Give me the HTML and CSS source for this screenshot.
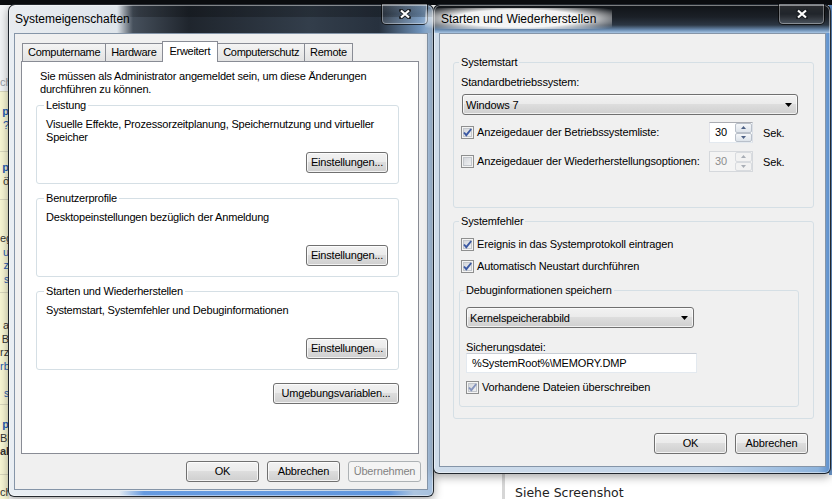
FILE: index.html
```html
<!DOCTYPE html>
<html lang="de">
<head>
<meta charset="utf-8">
<title>Systemeigenschaften</title>
<link rel="stylesheet" href="styles.css">
</head>
<body>
<div class="desktop">

  <!-- Browserseite hinter den Dialogen -->
  <div class="page-edge">
    <div class="post head"><span class="dim">ch</span></div>
    <div class="post p1"><b>p</b><br>?</div>
    <div class="post p2"><b>p</b><br><span class="txt">ö</span></div>
    <div class="post p3"><span class="txt">eg</span><br>u<br>z<br><small>s</small></div>
    <div class="post p4"><span class="txt">a<br>B<br>rz</span><br>rb<br><br><small>s</small></div>
    <div class="post p5"><b>p</b><br><span class="txt">Bl<br><b>al</b></span></div>
    <div class="post p6"><span class="txt">ch</span></div>
  </div>
  <div class="page-post">
    <p>Siehe Screenshot</p>
  </div>

  <!-- Systemeigenschaften -->
  <div class="window sysprops">
    <div class="titlebar">
      <span class="title">Systemeigenschaften</span>
      <button class="close" aria-label="Schließen">
        <svg width="12" height="10" viewBox="0 0 12 10"><path d="M2 1.5l8 7M10 1.5l-8 7" stroke="#1b1f24" stroke-width="4" stroke-linecap="round"/><path d="M2 1.5l8 7M10 1.5l-8 7" stroke="#fff" stroke-width="2.2"/></svg>
      </button>
    </div>
    <div class="client">
      <div class="tabs">
        <span class="tab">Computername</span>
        <span class="tab">Hardware</span>
        <span class="tab active">Erweitert</span>
        <span class="tab">Computerschutz</span>
        <span class="tab">Remote</span>
      </div>
      <div class="tabpanel">
        <p class="note">Sie müssen als Administrator angemeldet sein, um diese Änderungen durchführen zu können.</p>

        <div class="group perf">
          <span class="group-title">Leistung</span>
          <p class="group-text">Visuelle Effekte, Prozessorzeitplanung, Speichernutzung und virtueller Speicher</p>
          <button class="btn group-btn">Einstellungen...</button>
        </div>

        <div class="group">
          <span class="group-title">Benutzerprofile</span>
          <p class="group-text">Desktopeinstellungen bezüglich der Anmeldung</p>
          <button class="btn group-btn">Einstellungen...</button>
        </div>

        <div class="group">
          <span class="group-title">Starten und Wiederherstellen</span>
          <p class="group-text">Systemstart, Systemfehler und Debuginformationen</p>
          <button class="btn group-btn">Einstellungen...</button>
        </div>

        <div class="panel-actions">
          <button class="btn env-btn">Umgebungsvariablen...</button>
        </div>
      </div>
      <div class="dialog-buttons">
        <button class="btn">OK</button>
        <button class="btn">Abbrechen</button>
        <button class="btn" disabled>Übernehmen</button>
      </div>
    </div>
  </div>

  <!-- Starten und Wiederherstellen -->
  <div class="window startup">
    <div class="titlebar">
      <span class="title">Starten und Wiederherstellen</span>
      <button class="close" aria-label="Schließen">
        <svg width="12" height="10" viewBox="0 0 12 10"><path d="M2 1.5l8 7M10 1.5l-8 7" stroke="#1b1f24" stroke-width="4" stroke-linecap="round"/><path d="M2 1.5l8 7M10 1.5l-8 7" stroke="#fff" stroke-width="2.2"/></svg>
      </button>
    </div>
    <div class="client">
      <div class="group boot">
        <span class="group-title">Systemstart</span>
        <span class="field-label">Standardbetriebssystem:</span>
        <div class="combo os-select">
          <span>Windows 7</span>
          <svg width="7" height="4" viewBox="0 0 7 4"><path d="M0 0h7L3.5 4z" fill="#000"/></svg>
        </div>
        <div class="timeout-row">
          <label class="check">
            <span class="box"><svg width="11" height="11" viewBox="0 0 11 11"><path d="M2 5.5L4.3 8.2 9.2 2" fill="none" stroke="#3b59a3" stroke-width="1.9"/></svg></span>
            Anzeigedauer der Betriebssystemliste:
          </label>
          <div class="spin">
            <span class="spin-value">30</span>
            <span class="spin-btns">
              <span><svg width="5" height="3" viewBox="0 0 5 3"><path d="M2.5 0L5 3H0z" fill="#4d6185"/></svg></span>
              <span><svg width="5" height="3" viewBox="0 0 5 3"><path d="M0 0h5L2.5 3z" fill="#4d6185"/></svg></span>
            </span>
          </div>
          <span class="unit">Sek.</span>
        </div>
        <div class="timeout-row second">
          <label class="check">
            <span class="box"></span>
            Anzeigedauer der Wiederherstellungsoptionen:
          </label>
          <div class="spin disabled">
            <span class="spin-value">30</span>
            <span class="spin-btns">
              <span><svg width="5" height="3" viewBox="0 0 5 3"><path d="M2.5 0L5 3H0z" fill="#a8adb5"/></svg></span>
              <span><svg width="5" height="3" viewBox="0 0 5 3"><path d="M0 0h5L2.5 3z" fill="#a8adb5"/></svg></span>
            </span>
          </div>
          <span class="unit">Sek.</span>
        </div>
      </div>

      <div class="group failure">
        <span class="group-title">Systemfehler</span>
        <label class="check first">
          <span class="box"><svg width="11" height="11" viewBox="0 0 11 11"><path d="M2 5.5L4.3 8.2 9.2 2" fill="none" stroke="#3b59a3" stroke-width="1.9"/></svg></span>
          Ereignis in das Systemprotokoll eintragen
        </label>
        <label class="check">
          <span class="box"><svg width="11" height="11" viewBox="0 0 11 11"><path d="M2 5.5L4.3 8.2 9.2 2" fill="none" stroke="#3b59a3" stroke-width="1.9"/></svg></span>
          Automatisch Neustart durchführen
        </label>

        <div class="group debug">
          <span class="group-title">Debuginformationen speichern</span>
          <div class="combo dump-select">
            <span>Kernelspeicherabbild</span>
            <svg width="7" height="4" viewBox="0 0 7 4"><path d="M0 0h7L3.5 4z" fill="#000"/></svg>
          </div>
          <span class="field-label dump-label">Sicherungsdatei:</span>
          <div class="textbox">%SystemRoot%\MEMORY.DMP</div>
          <label class="check overwrite">
            <span class="box"><svg width="11" height="11" viewBox="0 0 11 11"><path d="M2 5.5L4.3 8.2 9.2 2" fill="none" stroke="#8594bd" stroke-width="1.9"/></svg></span>
            Vorhandene Dateien überschreiben
          </label>
        </div>
      </div>

      <div class="dialog-buttons">
        <button class="btn">OK</button>
        <button class="btn">Abbrechen</button>
      </div>
    </div>
  </div>

</div>
</body>
</html>
```

FILE: styles.css
```css
* {
    box-sizing: border-box;
}
body {
    margin: 0;
    width: 832px;
    height: 499px;
    overflow: hidden;
    font-family: "Liberation Sans", Arial, sans-serif;
    font-size: 11px;
    color: #000;
}
p {
    margin: 0;
}
.desktop {
    position: relative;
    width: 832px;
    height: 499px;
    overflow: hidden;
    background:
        linear-gradient(#0b0d10, #0b0d10) 0 0 / 100% 5px no-repeat,
        linear-gradient(#5f8dc6, #6f9bd0) 100% 0 / 3px 475px no-repeat,
        #fff;
}

/* Reste der Webseite hinter den Fenstern */
.page-edge {
    position: absolute;
    left: 0;
    top: 5px;
    width: 9px;
    height: 494px;
    overflow: hidden;
    text-align: right;
    line-height: 13.5px;
    color: #2a5db0;
    background: #f8f7d4;
}
.page-edge .post {
    border-bottom: 1px solid #d9d8bd;
}
.page-edge .txt {
    color: #333;
}
.page-edge .dim {
    color: #9aa0a6;
}
.page-edge small {
    font-size: 10px;
}
.page-edge .head {
    height: 87px;
    padding-top: 71px;
    background: #f3f5f7;
}
.page-edge .p1 { height: 60px; padding-top: 13px; }
.page-edge .p2 { height: 48px; padding-top: 9px; }
.page-edge .p3 { height: 93px; padding-top: 32px; }
.page-edge .p4 { height: 112px; padding-top: 26px; }
.page-edge .p5 { height: 70px; padding-top: 13px; }
.page-edge .p6 { height: 24px; padding-top: 11px; border-bottom: 0; }

.page-post {
    position: absolute;
    left: 502px;
    top: 470px;
    width: 330px;
    height: 29px;
    padding: 15px 0 0 10px;
    border-left: 3px solid #d6d6d6;
    font-family: "DejaVu Sans", sans-serif;
    font-size: 12.5px;
    line-height: 15px;
    color: #222;
}

/* Fensterrahmen (Aero, inaktiv) */
.window {
    position: absolute;
    display: flex;
    flex-direction: column;
    border: 1px solid rgba(16, 20, 26, 0.9);
    border-radius: 7px 7px 6px 6px;
    box-shadow: inset 0 0 0 1px rgba(255, 255, 255, 0.45), 0 3px 10px rgba(0, 0, 0, 0.35);
}
.sysprops {
    left: 8px;
    top: 4px;
    width: 426px;
    height: 493px;
    background:
        linear-gradient(to right, rgba(0, 0, 0, 0) 110px, rgba(0, 0, 0, 0.25) 130px) 0 0 / 100% 12px no-repeat,
        linear-gradient(to right, #e8ecf0 0, #dfe5eb 108px, #46505c 124px, #1f252d 180px, #333e4b 300px, #27313e 370px, #6f93bb 412px, #a8c4e2 100%) 0 0 / 100% 28px no-repeat,
        linear-gradient(to right, rgba(80, 140, 220, 0) 110px, rgba(80, 140, 220, 0.85) 135px, rgba(80, 140, 220, 0.85) 380px, rgba(80, 140, 220, 0) 405px) 0 100% / 100% 5px no-repeat,
        linear-gradient(to right, #e9eef3 0, #dde6ef 60%, #a7c1de 100%);
}
.startup {
    left: 433px;
    top: 4px;
    width: 398px;
    height: 470px;
    background:
        linear-gradient(#101317 0, #1b2027 12px, #2c3744 20px, #6d8fb4 25px, #a9c6e4 28px) 0 0 / 100% 28px no-repeat,
        linear-gradient(to right, #cfdcea 0, #c2d5ea 70%, #8db3dc 97%, #5c8fcc 100%);
}
.titlebar {
    flex: none;
    display: flex;
    align-items: flex-start;
    height: 28px;
}
.title {
    margin: 3px 0 0 -10px;
    padding: 4px 16px 3px;
    font-size: 12px;
    line-height: 14px;
    color: #000;
}
.startup .title {
    margin-left: -9px;
    background: radial-gradient(62% 75%, rgba(255, 255, 255, 0.95) 55%, rgba(255, 255, 255, 0) 100%);
}
.close {
    display: flex;
    align-items: center;
    justify-content: center;
    width: 47px;
    height: 21px;
    margin: -1px 5px 0 auto;
    padding: 0;
    border: 1px solid rgba(0, 0, 0, 0.75);
    border-top: 0;
    border-radius: 0 0 5px 5px;
    background: linear-gradient(rgba(255, 255, 255, 0.12), rgba(255, 255, 255, 0.04) 50%, rgba(255, 255, 255, 0.16));
    box-shadow: inset 0 0 0 1px rgba(255, 255, 255, 0.35);
}

.client {
    flex: 1;
    display: flex;
    flex-direction: column;
    border: 1px solid #8595a8;
    background: #f0f0f0;
}
.sysprops .client {
    margin: 0 5px 6px 5px;
    letter-spacing: -0.2px;
}
.startup .client {
    margin: 0 4px 6px 5px;
    letter-spacing: -0.15px;
}

/* Schaltflächen */
.btn {
    width: 73px;
    height: 21px;
    padding: 0;
    border: 1px solid #707070;
    border-radius: 3px;
    background: linear-gradient(#f2f2f2 0, #ebebeb 45%, #dddddd 50%, #cfcfcf 100%);
    box-shadow: inset 0 0 0 1px rgba(255, 255, 255, 0.75);
    font: inherit;
    letter-spacing: inherit;
    line-height: 19px;
    white-space: nowrap;
    color: #000;
}
.btn:disabled {
    border-color: #adb2b5;
    background: #f4f4f4;
    box-shadow: none;
    color: #838383;
}
.dialog-buttons {
    display: flex;
    justify-content: flex-end;
    gap: 8px;
}
.sysprops .dialog-buttons {
    margin-top: 7px;
    padding-right: 6px;
}
.startup .dialog-buttons {
    margin-top: 14px;
    padding-right: 17px;
}

/* Registerkarten */
.tabs {
    position: relative;
    z-index: 1;
    display: flex;
    align-items: flex-end;
    height: 20px;
    margin: 7px 0 0 7px;
    letter-spacing: -0.3px;
}
.tab {
    height: 18px;
    margin-left: -1px;
    padding: 0 5px;
    border: 1px solid #898c95;
    border-bottom: 0;
    line-height: 17px;
    background: linear-gradient(#f4f4f4, #e3e3e3);
}
.tab:first-child {
    margin-left: 0;
}
.tab.active {
    position: relative;
    height: 21px;
    margin-bottom: -1px;
    padding: 0 7px;
    line-height: 19px;
    background: #fff;
}
.tabpanel {
    display: flex;
    flex-direction: column;
    height: 393px;
    margin: 0 8px 0 6px;
    padding: 8px 19px 0 14px;
    border: 1px solid #898c95;
    background: #fff;
}
.note {
    margin-left: 4px;
    line-height: 13px;
}

/* Gruppenfelder */
.group {
    display: flex;
    flex-direction: column;
    border: 1px solid #d5dfe5;
    border-radius: 3px;
}
.group-title {
    align-self: flex-start;
    margin: -7px 0 0 -2px;
    padding: 0 2px;
    line-height: 13px;
    background: #fff;
}
.tabpanel .group {
    height: 79px;
    margin-top: 14px;
    padding: 0 10px 10px 9px;
}
.tabpanel .perf {
    margin-top: 9px;
}
.group-text {
    margin-top: 6px;
    line-height: 13px;
}
.group-btn {
    align-self: flex-end;
    width: 82px;
    margin-top: auto;
}
.panel-actions {
    display: flex;
    justify-content: flex-end;
    margin-top: 13px;
}
.env-btn {
    width: 126px;
}

/* Starten und Wiederherstellen */
.startup .group-title {
    background: #f0f0f0;
}
.boot {
    height: 146px;
    margin: 28px 11px 0 13px;
    padding: 0 15px 0 7px;
}
.failure {
    height: 198px;
    margin: 13px 11px 0 13px;
    padding: 0 15px 0 7px;
}
.field-label {
    margin-top: 7px;
    line-height: 13px;
}
.combo {
    display: flex;
    align-items: center;
    justify-content: space-between;
    height: 21px;
    padding: 0 5px 0 3px;
    border: 1px solid #707070;
    border-radius: 3px;
    background: linear-gradient(#f2f2f2 0, #ebebeb 45%, #dddddd 50%, #cfcfcf 100%);
    box-shadow: inset 0 0 0 1px rgba(255, 255, 255, 0.7);
}
.os-select {
    margin: 5px 0 0 1px;
}
.timeout-row {
    display: grid;
    grid-template-columns: 248px 44px auto;
    align-items: center;
    height: 21px;
    margin-top: 7px;
}
.timeout-row.second {
    margin-top: 8px;
}
.unit {
    padding-left: 10px;
}
.spin {
    display: flex;
    height: 21px;
    border: 1px solid;
    border-color: #abadb3 #dbdfe6 #e3e9ef #e2e3ea;
    background: #fff;
}
.spin-value {
    flex: 1;
    padding-left: 5px;
    line-height: 19px;
}
.spin-btns {
    display: flex;
    flex-direction: column;
    width: 17px;
}
.spin-btns span {
    flex: 1;
    display: flex;
    align-items: center;
    justify-content: center;
    border: 1px solid #b9c0ca;
    border-radius: 2px;
    background: linear-gradient(#f5f7f9, #dde3ea);
}
.spin.disabled {
    background: #f4f4f4;
    border-color: #d5d8dc;
    color: #8d8d8d;
}
.spin.disabled .spin-btns span {
    border-color: #d8dbdf;
    background: #f2f2f2;
}

/* Kontrollkästchen */
.check {
    display: flex;
    align-items: center;
    gap: 3px;
    line-height: 13px;
}
.box {
    flex: none;
    width: 13px;
    height: 13px;
    border: 1px solid #8e8f8f;
    background: linear-gradient(135deg, #cdd0d5, #f7f8f9);
    box-shadow: inset 0 0 0 1px #f4f4f4, inset 0 0 0 2px #c3c7cc;
}
.box svg {
    display: block;
}
.failure .check {
    margin-top: 9px;
}
.failure .check.first {
    margin-top: 10px;
}
.debug {
    height: 117px;
    margin: 17px -1px 0 -2px;
    padding: 0 0 0 6px;
}
.dump-select {
    width: 228px;
    margin-top: 10px;
}
.dump-label {
    margin-top: 13px;
    line-height: 12px;
}
.textbox {
    width: 231px;
    height: 20px;
    padding-left: 5px;
    border: 1px solid;
    border-color: #c9ced6 #e3e9ef #e3e9ef #e3e9ef;
    line-height: 18px;
    background: #fff;
}
.debug .check.overwrite {
    margin-top: 8px;
}
```
